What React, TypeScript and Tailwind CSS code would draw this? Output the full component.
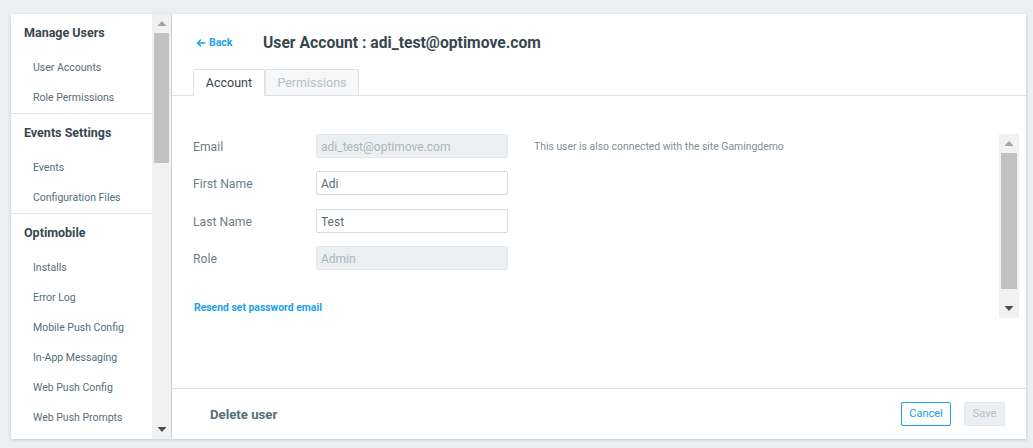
import React from "react";

const font = { fontFamily: "Roboto, 'Noto Sans', sans-serif" };

function SideSection({ title, items, border = true }: { title: string; items: string[]; border?: boolean }) {
  return (
    <div className={border ? "pb-[1px] border-b border-[#e3e7ea]" : ""}>
      <div className="h-[38px] flex items-center pl-[13px] pt-[1px] text-[12.5px] font-bold text-[#37474f]">{title}</div>
      {items.map((it) => (
        <div key={it} className="h-[30px] flex items-center pl-[22px] pt-[2px] text-[10.5px] text-[#546e7a]">
          {it}
        </div>
      ))}
    </div>
  );
}

function Scrollbar({ h, thumbTop, thumbH, w }: { h: number; thumbTop: string; thumbH: string; w: string }) {
  return (
    <div className={`relative bg-[#f1f1f1] ${w} shrink-0`} style={{ height: h }}>
      <svg className="absolute left-1/2 -translate-x-1/2 top-[7px]" width="9" height="5" viewBox="0 0 9 5">
        <polygon points="0,5 9,5 4.5,0" fill="#a3a3a3" />
      </svg>
      <div className={`absolute left-[2px] right-[2px] bg-[#c1c1c1] ${thumbTop} ${thumbH}`} />
      <svg className="absolute left-1/2 -translate-x-1/2 bottom-[7px]" width="9" height="5" viewBox="0 0 9 5">
        <polygon points="0,0 9,0 4.5,5" fill="#505050" />
      </svg>
    </div>
  );
}

function Field({ label, value, disabled, className = "" }: { label: string; value: string; disabled?: boolean; className?: string }) {
  return (
    <div className={`flex items-center h-[24px] ${className}`}>
      <div className="w-[123px] pt-[2px] text-[12.2px] text-[#6e7f88]">{label}</div>
      <div
        className={`w-[192px] h-[24px] flex items-center px-[4px] pt-[1px] text-[12px] rounded-[2px] border ${
          disabled ? "bg-[#eceff1] border-[#e3e7ea] text-[#a9b6bd]" : "bg-white border-[#d5dbdf] text-[#5d6d75]"
        }`}
      >
        {value}
      </div>
    </div>
  );
}

export default function App() {
  return (
    <div className="w-[1033px] h-[448px] bg-[#eceff1] flex gap-[1px] pl-[11px] pt-[14px] overflow-hidden" style={font}>
      {/* Sidebar */}
      <div className="w-[160px] h-[425px] bg-white flex shadow-[0_1px_3px_rgba(0,0,0,0.18)] overflow-hidden">
        <div className="w-[141px] overflow-hidden">
          <SideSection title="Manage Users" items={["User Accounts", "Role Permissions"]} />
          <SideSection title="Events Settings" items={["Events", "Configuration Files"]} />
          <SideSection
            title="Optimobile"
            border={false}
            items={["Installs", "Error Log", "Mobile Push Config", "In-App Messaging", "Web Push Config", "Web Push Prompts"]}
          />
        </div>
        <Scrollbar h={425} w="w-[19px]" thumbTop="top-[19px]" thumbH="h-[130px]" />
      </div>

      {/* Main */}
      <div className="w-[854px] h-[425px] bg-white flex flex-col shadow-[0_1px_3px_rgba(0,0,0,0.18)]">
        <div className="h-[55px] flex items-center pl-[24px] pt-[2px]">
          <div className="flex items-center gap-[3px] text-[#1ba1e4] text-[10.5px] font-bold w-[67px]">
            <svg width="10" height="10" viewBox="0 0 10 10" fill="none" stroke="#1ba1e4" strokeWidth="1.4" strokeLinecap="round" strokeLinejoin="round">
              <path d="M9 5H1.5M4.5 2L1.5 5l3 3" />
            </svg>
            <span>Back</span>
          </div>
          <div className="text-[15.7px] font-bold text-[#37474f]">User Account : adi_test@optimove.com</div>
        </div>
        <div className="h-[27px] flex items-end pl-[21px] border-b border-[#dde2e5]">
          <div className="h-[27px] w-[72px] -mb-[1px] pt-[1px] bg-white border border-b-0 border-[#dde2e5] rounded-t-[2px] flex items-center justify-center text-[12.5px] text-[#37474f]">
            Account
          </div>
          <div className="h-[26px] w-[94px] pt-[1px] bg-[#f5f7f8] border border-b-0 border-[#dde2e5] rounded-t-[2px] flex items-center justify-center text-[12.5px] text-[#b3c0c7]">
            Permissions
          </div>
        </div>

        <div className="flex-1 pt-[38px] pl-[21px] pr-[7px] flex">
          <div className="flex-1 flex">
            <div className="w-[341px]">
              <Field label="Email" value="adi_test@optimove.com" disabled />
              <Field label="First Name" value="Adi" className="mt-[13px]" />
              <Field label="Last Name" value="Test" className="mt-[14px]" />
              <Field label="Role" value="Admin" disabled className="mt-[13px]" />
              <div className="mt-[30px] text-[10.4px] font-bold text-[#1ba1e4] pl-[1px]">Resend set password email</div>
            </div>
            <div className="h-[24px] pt-[2px] flex items-center text-[10.4px] text-[#7b8f99]">This user is also connected with the site Gamingdemo</div>
          </div>
          <Scrollbar h={184} w="w-[20px]" thumbTop="top-[19px]" thumbH="h-[136px]" />
        </div>

        <div className="h-[51px] border-t border-[#dde2e5] flex items-center pl-[38px] pr-[21px]">
          <div className="flex-1 pt-[1px] text-[13.2px] font-bold text-[#546e7a]">Delete user</div>
          <div className="w-[50px] h-[24px] border border-[#1ba1e4] rounded-[2px] flex items-center justify-center text-[11px] text-[#1ba1e4]">
            Cancel
          </div>
          <div className="ml-[13px] w-[41px] h-[24px] bg-[#eceff1] border border-[#e3e7ea] rounded-[2px] flex items-center justify-center text-[11px] text-[#b3c0c7]">
            Save
          </div>
        </div>
      </div>
    </div>
  );
}
